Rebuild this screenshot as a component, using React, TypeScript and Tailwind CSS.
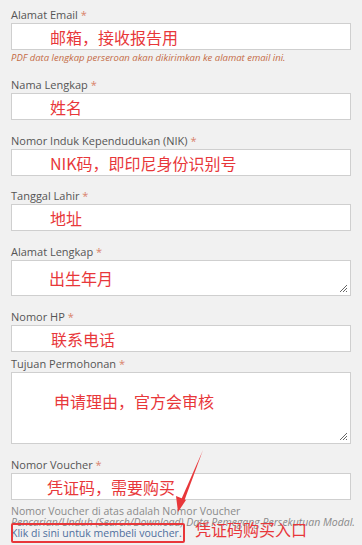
const font = { fontFamily: '"Open Sans", "Noto Sans", "Noto Sans CJK SC", sans-serif' };

function Label({ text }: { text: string }) {
  return (
    <div className="h-[16px] text-[11px] leading-[16px] text-[#555]">
      {text} <span className="text-[#d9826b]">*</span>
    </div>
  );
}

function Note({ text, className = "" }: { text: string; className?: string }) {
  return (
    <span
      className={`text-[16px] leading-[20px] text-[#e8373a] ${className}`}
      style={{ fontFamily: '"Noto Sans CJK SC", "Noto Sans", sans-serif' }}
    >
      {text}
    </span>
  );
}

function Grip() {
  return (
    <svg className="absolute right-[2px] bottom-[2px]" width="10" height="10" viewBox="0 0 10 10">
      <path d="M9 2 L2 9 M9 5 L5 9 M9 8 L8 9" stroke="#666" strokeWidth="1" />
    </svg>
  );
}

export default function App() {
  return (
    <div className="relative w-[362px] h-[545px] overflow-hidden bg-[#f1f1f1] px-[11px] pt-[7px]" style={font}>
      <Label text="Alamat Email" />
      <div className="h-[27px] bg-white border border-[#cfcfcf] flex items-center pl-[38px]">
        <Note text="邮箱，接收报告用" />
      </div>
      <div className="mt-[2px] text-[9.5px] leading-[12px] italic text-[#c46b45]">
        PDF data lengkap perseroan akan dikirimkan ke alamat email ini.
      </div>

      <div className="mt-[13px]">
        <Label text="Nama Lengkap" />
        <div className="h-[27px] bg-white border border-[#cfcfcf] flex items-center pl-[38px]">
          <Note text="姓名" />
        </div>
      </div>

      <div className="mt-[13px]">
        <Label text="Nomor Induk Kependudukan (NIK)" />
        <div className="h-[27px] bg-white border border-[#cfcfcf] flex items-center pl-[38px]">
          <Note text="NIK码，即印尼身份识别号" />
        </div>
      </div>

      <div className="mt-[12px]">
        <Label text="Tanggal Lahir" />
        <div className="h-[27px] bg-white border border-[#cfcfcf] flex items-center pl-[38px]">
          <Note text="地址" />
        </div>
      </div>

      <div className="mt-[13px]">
        <Label text="Alamat Lengkap" />
        <div className="relative h-[36px] bg-white border border-[#cfcfcf] flex items-center pl-[37px]">
          <Note text="出生年月" />
          <Grip />
        </div>
      </div>

      <div className="mt-[13px]">
        <Label text="Nomor HP" />
        <div className="h-[27px] bg-white border border-[#cfcfcf] flex items-center pl-[39px]">
          <Note text="联系电话" />
        </div>
      </div>

      <div className="mt-[4px]">
        <Label text="Tujuan Permohonan" />
        <div className="relative h-[72px] bg-white border border-[#cfcfcf] pl-[42px] pt-[17px]">
          <Note text="申请理由，官方会审核" />
          <Grip />
        </div>
      </div>

      <div className="mt-[13px]">
        <Label text="Nomor Voucher" />
        <div className="h-[27px] bg-white border border-[#cfcfcf] flex items-center pl-[35px]">
          <Note text="凭证码，需要购买" />
        </div>
      </div>

      <div className="mt-[6px] text-[10.5px] leading-[11px] text-[#8a8a8a]">
        <div>Nomor Voucher di atas adalah Nomor Voucher</div>
        <div className="italic whitespace-nowrap">Pencarian/Unduh (Search/Download) Data Pemegang Persekutuan Modal.</div>
        <div className="text-[#4f6f9e]">Klik di sini untuk membeli voucher.</div>
      </div>

      {/* annotation overlay */}
      <div className="absolute left-[11px] top-[523px] w-[174px] h-[20px] border-2 border-[#e8373a] rounded-[2px]" />
      <div className="absolute left-[195px] top-[518px]">
        <Note text="凭证码购买入口" />
      </div>
      <svg className="absolute left-0 top-0 pointer-events-none" width="362" height="545">
        <path d="M203 450 L181 500 L184 501.5 Z" fill="#e8373a" />
        <path d="M178 512 L176 496 L186 500 Z" fill="#e8373a" />
      </svg>
    </div>
  );
}
